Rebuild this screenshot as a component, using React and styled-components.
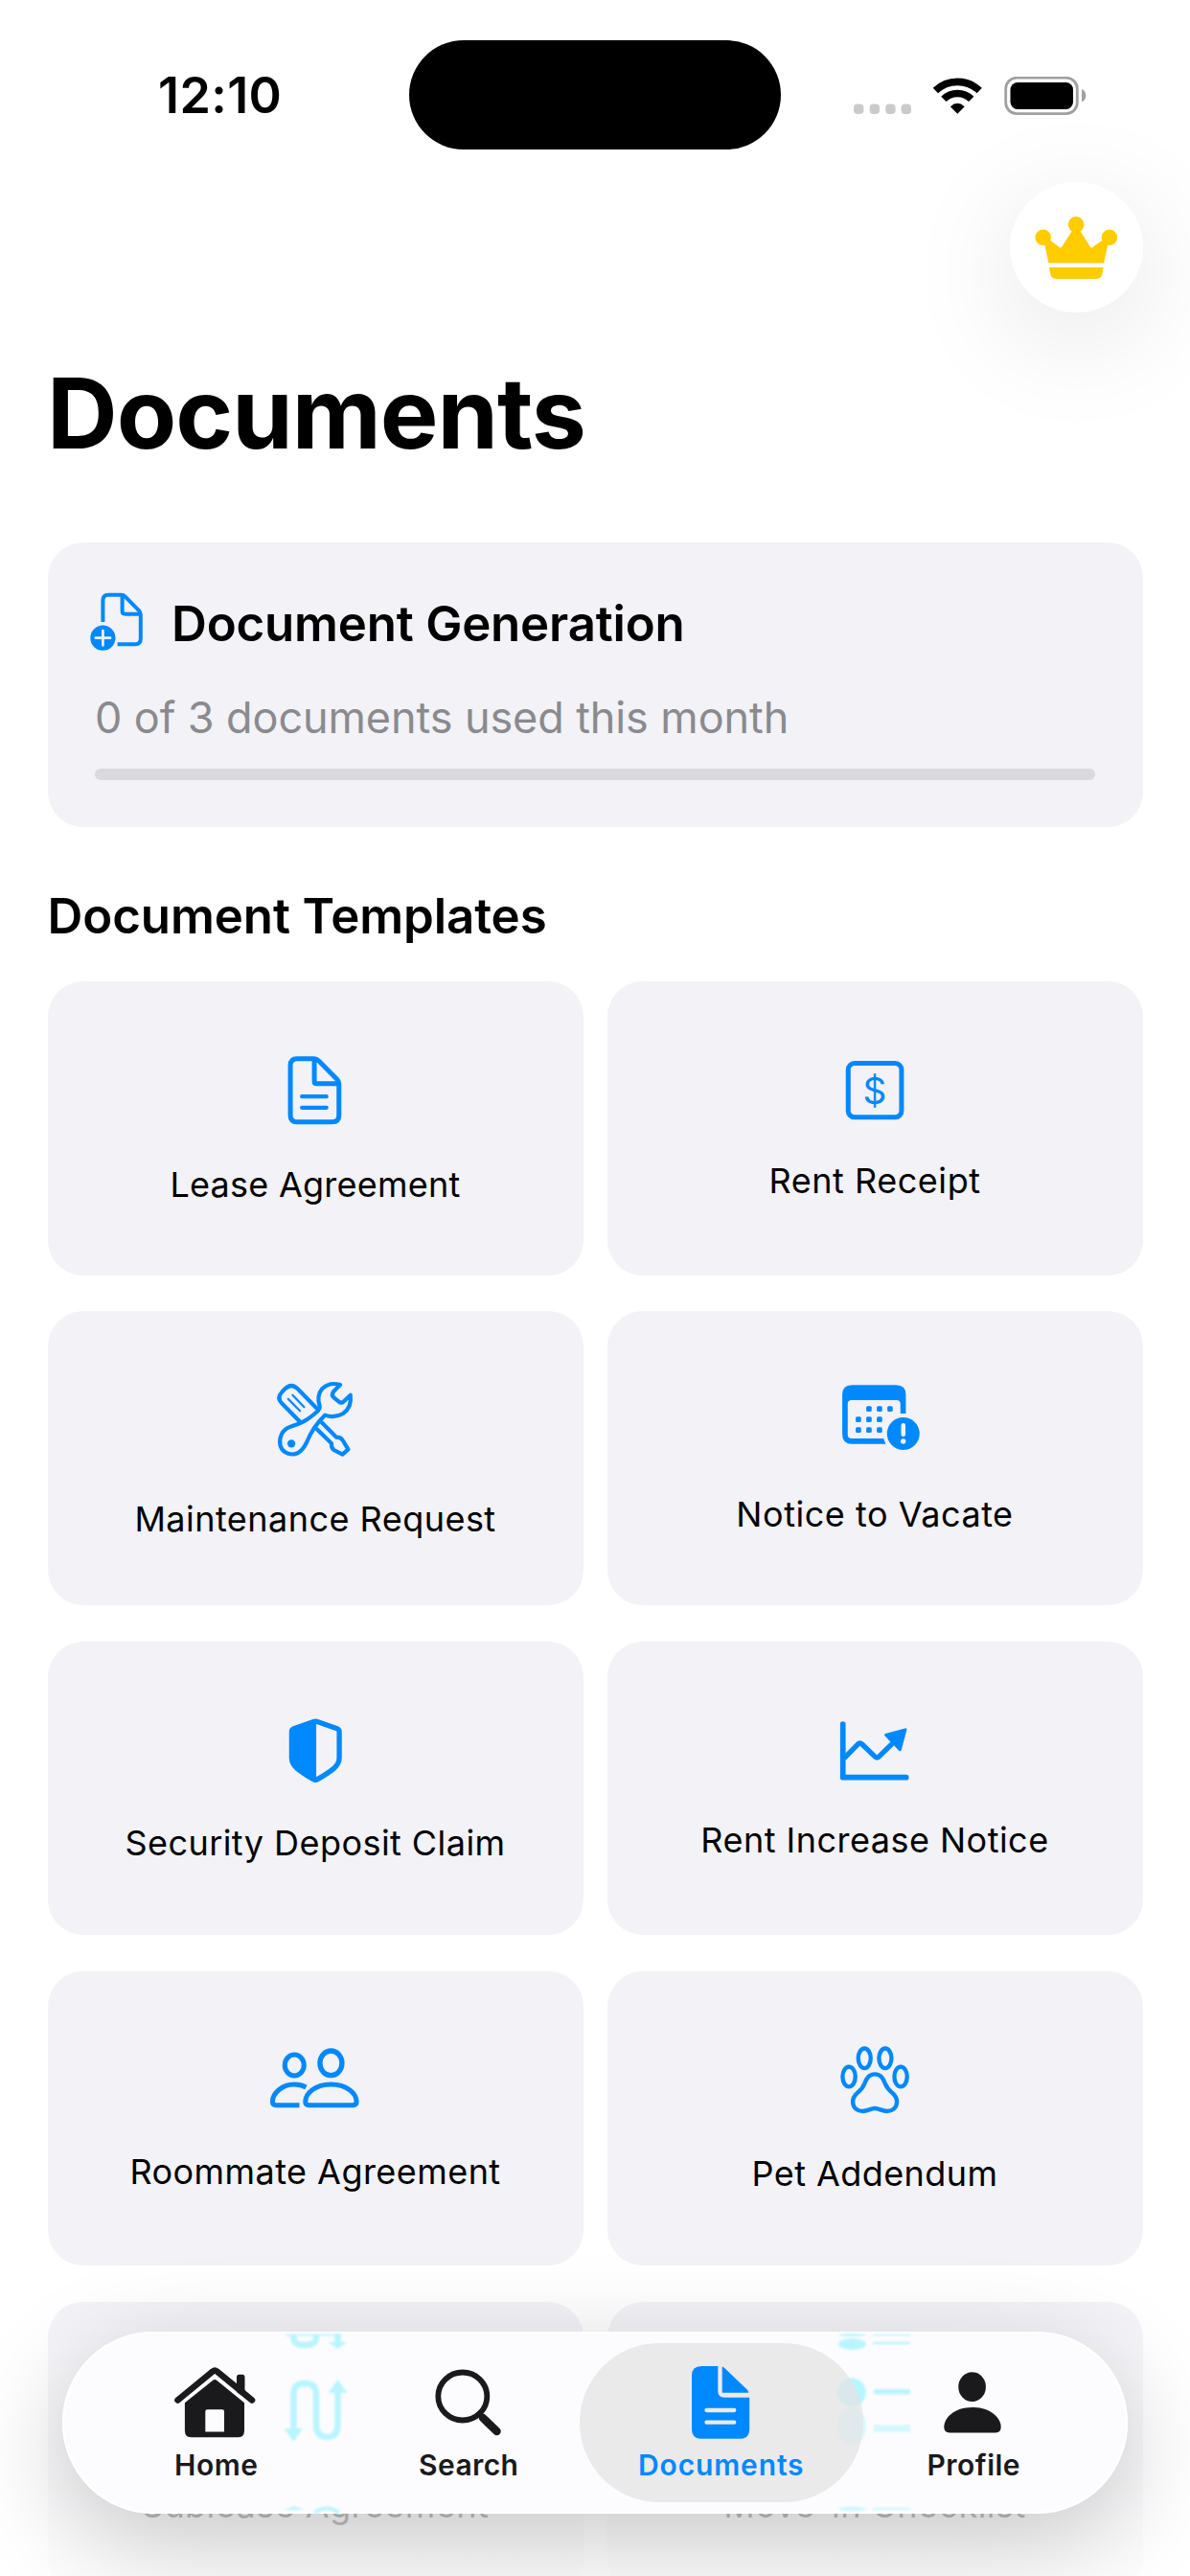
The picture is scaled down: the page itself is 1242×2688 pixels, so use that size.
import React from "react";
import styled, { createGlobalStyle } from "styled-components";

const BLUE = "#0088ff";
const INK = "#1a1a1c";

const GlobalStyle = createGlobalStyle`
  html, body { margin: 0; padding: 0; background: #fff; }
  * { box-sizing: border-box; }
`;

const Screen = styled.div`
  position: relative;
  display: flex;
  flex-direction: column;
  width: 1242px;
  height: 2688px;
  overflow: hidden;
  background: #fff;
  color: #000;
  font-family: Inter, "Liberation Sans", sans-serif;

  & > * {
    flex: none;
  }
`;

const StatusBar = styled.header`
  display: flex;
  align-items: flex-start;
  height: 190px;
  padding-top: 42px;
`;

const Clock = styled.div`
  width: 427px;
  padding-left: 165px;
  font-size: 52px;
  line-height: 62px;
  margin-top: 27px;
  font-weight: 600;
  letter-spacing: ${(p) => p.$spacing}px;
  white-space: nowrap;
`;

const Island = styled.div`
  width: 388px;
  height: 114px;
  border-radius: 57px;
  background: #000;
`;

const StatusIcons = styled.div`
  display: flex;
  margin: 38px 0 0 76px;
  height: 41px;
`;

const CrownRow = styled.div`
  display: flex;
  justify-content: flex-end;
  padding-right: 49px;
`;

const CrownButton = styled.button`
  display: flex;
  width: 139px;
  height: 136px;
  padding: 0;
  border: 0;
  border-radius: 50%;
  background: #fff;
  box-shadow: 0 26px 120px rgba(0, 0, 0, 0.11);
`;

const Title = styled.h1`
  margin: 40px 0 0 49px;
  font-size: 102px;
  line-height: 130px;
  font-weight: 700;
  letter-spacing: ${(p) => p.$spacing}px;
`;

const UsageCard = styled.section`
  display: flex;
  flex-direction: column;
  width: 1143px;
  height: 297px;
  margin: 70px 0 0 49.5px;
  padding: 50px 49.5px 0 44px;
  border-radius: 37px;
  background: #f2f2f7;
`;

const UsageHead = styled.div`
  display: flex;
  align-items: center;
  height: 66px;
`;

const Heading = styled.h2`
  margin: 0 0 0 ${(p) => p.$left}px;
  padding-top: ${(p) => p.$drop || 0}px;
  font-size: 51px;
  line-height: 64px;
  font-weight: 600;
  letter-spacing: ${(p) => p.$spacing}px;
  white-space: nowrap;
`;

const UsageText = styled.p`
  margin: 39px 0 0 5.5px;
  height: 56px;
  font-size: 45px;
  line-height: 56px;
  color: #8a8a8e;
  letter-spacing: ${(p) => p.$spacing}px;
  white-space: nowrap;
`;

const Track = styled.div`
  height: 12px;
  margin: 25px 0 0 5.5px;
  border-radius: 6px;
  background: #d9d9de;
`;

const SectionHead = styled.div`
  height: 161px;
  padding-top: 61px;
`;

const Grid = styled.main`
  display: grid;
  grid-template-columns: 559px 559px;
  grid-auto-rows: 306.6px;
  column-gap: 25px;
  row-gap: 37.8px;
  padding-left: 49.5px;
`;

const Card = styled.article`
  display: flex;
  flex-direction: column;
  align-items: center;
  padding-top: 65px;
  border-radius: 37px;
  background: #f2f2f7;
`;

const CardIcon = styled.svg`
  display: block;
  width: 120px;
  height: 90px;
  flex: none;
  color: ${BLUE};
`;

const CardLabel = styled.span`
  margin-top: ${(p) => p.$top}px;
  font-size: 36px;
  line-height: 48px;
  letter-spacing: ${(p) => p.$spacing}px;
  white-space: nowrap;
`;

const BottomFade = styled.div`
  position: absolute;
  left: 0;
  right: 0;
  bottom: 0;
  height: 300px;
  background: linear-gradient(to bottom, rgba(255, 255, 255, 0) 0%, rgba(255, 255, 255, 0.3) 20%, rgba(255, 255, 255, 0.74) 78%, rgba(255, 255, 255, 0.86) 100%);
`;

const TabBar = styled.nav`
  position: absolute;
  left: 65px;
  bottom: 65px;
  display: flex;
  justify-content: center;
  align-items: center;
  width: 1112px;
  height: 190px;
  border-radius: 95px;
  background: #fcfcfe;
  box-shadow: 0 28px 104px rgba(0, 0, 0, 0.21), inset 0 0 0 2px #fff;
`;

const Refraction = styled.svg`
  position: absolute;
  inset: 0;
  width: 1112px;
  height: 190px;
  filter: blur(1.2px);
`;

const Tab = styled.div`
  position: relative;
  display: flex;
  flex-direction: column;
  align-items: center;
  width: 296px;
  height: 166px;
  margin: 0 -16.25px;
  padding-top: 17px;
  border-radius: 83px;
  background: ${(p) => (p.$active ? "rgba(228, 228, 229, 0.78)" : "transparent")};
  color: ${(p) => (p.$active ? BLUE : INK)};
`;

const TabIcon = styled.svg`
  display: block;
  width: 100px;
  height: 90px;
  flex: none;
`;

const TabLabel = styled.span`
  margin-top: 1px;
  font-size: 30px;
  line-height: 38px;
  font-weight: 600;
  letter-spacing: ${(p) => p.$spacing}px;
`;

const stroke = (width) => ({
  fill: "none",
  stroke: "currentColor",
  strokeWidth: width,
  strokeLinecap: "round",
  strokeLinejoin: "round",
});

const StatusGlyphs = () => (
  <svg width="244" height="41" viewBox="891 80 244 41">
    {[891, 907.6, 924.2, 940.6].map((x) => (
      <rect key={x} x={x} y="108.5" width="10.4" height="10.6" rx="4" fill="#cbcbcb" />
    ))}
    <g fill="none" stroke="#000" strokeWidth="7.6">
      <path d="M976.4 94.6 A33 33 0 0 1 1022.2 94.6" />
      <path d="M984.9 103.4 A20.5 20.5 0 0 1 1013.7 103.4" />
    </g>
    <path d="M999.3 118.8 L991.9 111.2 Q999.3 104.4 1006.7 111.2 Z" fill="#000" />
    <rect x="1049.7" y="81.2" width="74.6" height="37.4" rx="11.5" fill="none" stroke="#a0a0a0" strokeWidth="2.8" />
    <rect x="1054.5" y="86" width="65.5" height="28" rx="7.5" fill="#000" />
    <path d="M1129 93 Q1133.3 95 1133.3 99.7 Q1133.3 104.4 1129 106.4 Z" fill="#a0a0a0" />
  </svg>
);

const Crown = () => (
  <svg width="139" height="136" viewBox="1053.5 190 139 136" fill="#ffcc00">
    <circle cx="1122.6" cy="234.3" r="8.3" />
    <circle cx="1088.2" cy="247.8" r="8.3" />
    <circle cx="1157.4" cy="247.8" r="8.3" />
    <path d="M1094 274.4 L1089.6 254 L1095.6 250.8 L1105.4 258 Q1106.8 259 1107.8 257.4 L1119 240 H1126.2 L1137.4 257.4 Q1138.4 259 1139.8 258 L1150 250.8 L1156 254 L1151.6 274.4 Z" />
    <path d="M1094.6 279 H1151 L1150 285.6 Q1149.2 291 1143.8 291 H1101.8 Q1096.4 291 1095.6 285.6 Z" />
  </svg>
);

const NewDocument = () => (
  <svg width="56" height="62" viewBox="94 617.5 56 62" color={BLUE}>
    <g {...stroke(4)} strokeLinecap="butt">
      <path d="M107.4 648.5 V626 Q107.4 620.3 113 620.3 H126.5 Q129 620.3 130.8 622.1 L145 636.6 Q146.8 638.4 146.8 641 V666 Q146.8 671.7 141.2 671.7 H122.6" />
      <path d="M127.6 620.5 V637 Q127.6 640.2 130.8 640.2 H146.5" />
    </g>
    <circle cx="107.4" cy="665.2" r="13.1" fill="currentColor" />
    <path d="M99.8 665.2 H115 M107.4 657.6 V672.8" stroke="#f2f2f7" strokeWidth="2.7" strokeLinecap="round" />
  </svg>
);

const LeaseArt = () => (
  <g {...stroke(15)}>
    <path d="M211 136 H264 Q272 136 278 142 L336 200 Q342 206 342 214 V313 Q342 334 321 334 H211 Q190 334 190 313 V157 Q190 136 211 136 Z" />
    <path d="M265 138 V206 Q265 214 273 214 H340" />
    <path strokeWidth="12.5" d="M226 254 H303 M226 289 H303" />
  </g>
);

const ReceiptArt = () => (
  <>
    <rect x="196.5" y="150" width="167" height="169" rx="20" {...stroke(15)} />
    <text x="279.5" y="276" textAnchor="middle" fontFamily="Inter, sans-serif" fontSize="116" fill="currentColor">$</text>
  </>
);

const ToolsArt = () => (
  <>
    <g {...stroke(12.5)}>
      <path d="M273 182 L213 121 Q193 101 173 121 L164 130 Q146 149 163 166 L222 226" />
      <path strokeWidth="6.5" d="M197 140 L233 178 M183 152 L220 190" />
      <path d="M288 226 L334 272 Q348 272 354 282 L371 310 L353 326 L326 312 Q317 305 319 292 L273 247" />
      <path d="M346 108 Q312 98 289 121 Q271 142 282 176 Q283 183 277 189 C244 219 224 229 190 239 C163 248 154 274 158 297 C163 317 183 328 203 325 C222 322 232 307 241 288 C251 263 271 229 298 203 Q328 214 355 198 Q383 178 378 140 L356 161 Q349 167 341 160 L326 148 Q317 140 325 129 Z" />
    </g>
    <circle cx="193" cy="292" r="12.5" fill="currentColor" />
  </>
);

const CalendarArt = () => (
  <>
    <path fillRule="evenodd" fill="currentColor" d="M148 109 H287 Q317 109 317 139 V198 H300 V168 Q300 156 288 156 H147 Q135 156 135 168 V264 Q135 276 147 276 H247 L254 293 H148 Q118 293 118 263 V139 Q118 109 148 109 Z" />
    {[[193, 175], [226, 175], [259, 175], [160, 208], [193, 208], [226, 208], [160, 241], [193, 241], [226, 241]].map(([x, y]) => (
      <rect key={`${x}-${y}`} x={x} y={y} width="17" height="17" rx="4.5" fill="currentColor" />
    ))}
    <circle cx="309" cy="261" r="51" fill="currentColor" />
    <path d="M309 235 V263" stroke="#f2f2f7" strokeWidth="13.5" strokeLinecap="round" />
    <circle cx="309" cy="285" r="8" fill="#f2f2f7" />
  </>
);

const ShieldArt = () => (
  <>
    <path {...stroke(16)} d="M263 110.500 Q268.500 108.500 274 110.500 L336 132 Q343 134.500 343 142 V224 Q343 243 326 257 Q306 273 275 291 Q268.500 295 262 291 Q231 273 211 257 Q194 243 194 224 V142 Q194 134.500 201 132 Z" />
    <path fill="currentColor" d="M271 108 V294 L262 291 L211 257 L194 224 V138 Z" />
  </>
);

const ChartArt = () => (
  <>
    <path {...stroke(17)} d="M120 118 V285 H318" />
    <path {...stroke(16)} strokeLinecap="butt" d="M124 225 L166 182 Q172 174 180 181 L219 219 Q226 226 234 219 L280 174" />
    <path fill="currentColor" stroke="currentColor" strokeWidth="8" strokeLinejoin="round" d="M254 152 L316 135 L299 199 Z" />
  </>
);

const RoommatesArt = () => (
  <>
    <ellipse cx="317" cy="160.500" rx="34.500" ry="38.500" {...stroke(16)} />
    <ellipse cx="202.500" cy="167" rx="30" ry="33" {...stroke(15)} />
    <path {...stroke(15)} d="M248 292 Q237 292 237 281 C237 255 268 227 317 227 C366 227 397 255 397 281 Q397 292 386 292 Z" />
    <path {...stroke(15)} strokeLinecap="butt" d="M239 236 Q222 227 202 227 C164 227 134 255 134 281 Q134 292 145 292 H218" />
  </>
);

const PawArt = () => (
  <g {...stroke(13)}>
    <ellipse cx="187.500" cy="145.500" rx="19.500" ry="31" />
    <ellipse cx="252.500" cy="145.500" rx="19.500" ry="31" />
    <ellipse cx="139" cy="203" rx="20" ry="31" />
    <ellipse cx="301" cy="203" rx="20" ry="31" />
    <path d="M220 195 C201 195 194 208 188 224 C182 240 177 244 166 253 C155 263 150 271 151 283 C152 301 166 311 182 311 C198 311 207 302 220 302 C233 302 242 311 258 311 C274 311 288 301 289 283 C290 271 285 263 274 253 C263 244 258 240 252 224 C246 208 239 195 220 195 Z" />
  </g>
);

const templates = [
  { label: "Lease Agreement", top: 33, spacing: 0.25, box: "87.750 88.500 360 270", Art: LeaseArt },
  { label: "Rent Receipt", top: 29, spacing: 0.55, box: "99.750 88.500 360 270", Art: ReceiptArt },
  { label: "Maintenance Request", top: 38, spacing: 0.47, box: "87.750 72 360 270", Art: ToolsArt },
  { label: "Notice to Vacate", top: 33, spacing: 0.53, box: "39.750 72 360 270", Art: CalendarArt },
  { label: "Security Deposit Claim", top: 31, spacing: 0.45, box: "87.750 55 360 270", Art: ShieldArt },
  { label: "Rent Increase Notice", top: 28, spacing: 0.48, box: "39.750 55 360 270", Art: ChartArt },
  { label: "Roommate Agreement", top: 30, spacing: 0.45, box: "87.750 68 360 270", Art: RoommatesArt },
  { label: "Pet Addendum", top: 32, spacing: 0.43, box: "39.750 68 360 270", Art: PawArt },
  { label: "Sublease Agreement", top: 33, spacing: 0.45, box: "0 0 360 270", Art: () => null },
  { label: "Move-in Checklist", top: 33, spacing: 0.45, box: "0 0 360 270", Art: () => null },
];

const HomeArt = () => (
  <>
    <path {...stroke(6.6)} d="M9.500 42.500 L46 12.500 Q48.200 10.800 50.400 12.500 L87 42.500" />
    <path d="M71 34 V18.500 Q71 15.700 73.500 15.700 H77 Q79.500 15.700 79.500 18.500 V40 Z" fill="currentColor" />
    <path fillRule="evenodd" fill="currentColor" d="M46.600 21.600 Q48.200 20.300 49.800 21.600 L79 45.300 V74.500 Q79 81.300 72.200 81.300 H23.700 Q16.900 81.300 16.900 74.500 V45.300 Z M40.300 52.300 Q38.300 52.300 38.300 54.300 V75.500 H58 V54.300 Q58 52.300 56 52.300 Z" />
  </>
);

const SearchArt = () => (
  <>
    <ellipse cx="43.800" cy="38.500" rx="25.500" ry="25" {...stroke(5.8)} />
    <path {...stroke(6)} d="M61.500 57 L66 61.500" />
    <path {...stroke(8.5)} d="M65 61 L79.500 75" />
  </>
);

const DocumentsArt = () => (
  <>
    <path fill="currentColor" d="M29 7 H46.300 V33 Q46.300 39.700 53 39.700 H79.200 V73 Q79.200 82.700 69.500 82.700 H29 Q19 82.700 19 73 V17 Q19 7 29 7 Z" />
    <path fill="currentColor" d="M50.700 7.500 Q52.300 8 53.500 9.200 L76.500 31.300 Q78 32.800 78.400 34.700 H50.700 Z" />
    <path d="M34.500 53 H63.300 M34.500 65.700 H63.300" stroke="#eaeaeb" strokeWidth="4.300" strokeLinecap="round" />
  </>
);

const ProfileArt = () => (
  <g fill="currentColor">
    <ellipse cx="48.600" cy="28.700" rx="14.300" ry="15.400" />
    <path d="M25 76.400 Q19.300 76.400 19.300 70.500 C19.300 61 30 50 49 50 C68 50 78.700 61 78.700 70.500 Q78.700 76.400 73 76.400 Z" />
  </g>
);

const tabs = [
  { label: "Home", spacing: 0.5, Art: HomeArt },
  { label: "Search", spacing: 0.4, Art: SearchArt },
  { label: "Documents", spacing: 0.85, Art: DocumentsArt, active: true },
  { label: "Profile", spacing: 0.5, Art: ProfileArt },
];

const GlassRefraction = () => (
  <Refraction viewBox="65 2433 1112 190">
    <g fill="none" stroke="#b9f5ff" strokeWidth="6.5">
      <path d="M306.500 2535 V2498 Q306.500 2487 318 2487 Q330 2487 330 2498 V2530 Q330 2543 341.500 2543 Q352.500 2543 352.500 2530 V2496" />
      <path d="M306.500 2436 V2440 Q307 2447 318 2447 Q329.500 2447 330 2440 V2436" />
      <path d="M352.500 2435 V2444" />
      <path strokeWidth="3" d="M298 2436.500 H357" opacity="0.6" />
      <path strokeWidth="4" d="M328 2622 Q341 2613 354 2622" />
    </g>
    <g fill="#b9f5ff">
      <path d="M296.500 2534 H316 L306.500 2548 Z" />
      <path d="M342.500 2497 H362.500 L352.500 2483 Z" />
      <path d="M342.500 2444 H362.500 L352.500 2451 Z" />
      <path d="M296.500 2619 H317 L307 2615 Z" />
      <ellipse cx="889.500" cy="2446" rx="14.500" ry="6" />
      <ellipse cx="889.500" cy="2436.500" rx="14" ry="1.500" />
      <circle cx="889" cy="2496.500" r="15" />
      <ellipse cx="889" cy="2532" rx="15" ry="19" opacity="0.55" />
      <ellipse cx="889.500" cy="2618" rx="14" ry="2.500" opacity="0.7" />
    </g>
    <g stroke="#b9f5ff">
      <path d="M911 2445 H950" strokeWidth="2.500" />
      <path d="M911 2436.500 H950" strokeWidth="1.500" />
      <path d="M912 2495.700 H950" strokeWidth="5.500" />
      <path d="M912 2534 H950" strokeWidth="7.500" opacity="0.6" />
      <path d="M911 2618 H950" strokeWidth="1.800" opacity="0.7" />
    </g>
  </Refraction>
);

export default function App() {
  return (
    <Screen>
      <GlobalStyle />
      <StatusBar>
        <Clock $spacing={0.4}>12:10</Clock>
        <Island />
        <StatusIcons>
          <StatusGlyphs />
        </StatusIcons>
      </StatusBar>
      <CrownRow>
        <CrownButton aria-label="Premium">
          <Crown />
        </CrownButton>
      </CrownRow>
      <Title $spacing={-1}>Documents</Title>
      <UsageCard>
        <UsageHead>
          <NewDocument />
          <Heading $left={29.5} $drop={3} $spacing={-0.2}>Document Generation</Heading>
        </UsageHead>
        <UsageText $spacing={-0.1}>0 of 3 documents used this month</UsageText>
        <Track />
      </UsageCard>
      <SectionHead>
        <Heading $left={49.5} $spacing={-0.1}>Document Templates</Heading>
      </SectionHead>
      <Grid>
        {templates.map(({ label, top, spacing, box, Art }) => (
          <Card key={label}>
            <CardIcon viewBox={box}>
              <Art />
            </CardIcon>
            <CardLabel $top={top} $spacing={spacing}>{label}</CardLabel>
          </Card>
        ))}
      </Grid>
      <BottomFade />
      <TabBar>
        <GlassRefraction />
        {tabs.map(({ label, spacing, active, Art }) => (
          <Tab key={label} $active={active}>
            <TabIcon viewBox="0 0 100 90">
              <Art />
            </TabIcon>
            <TabLabel $spacing={spacing}>{label}</TabLabel>
          </Tab>
        ))}
      </TabBar>
    </Screen>
  );
}
